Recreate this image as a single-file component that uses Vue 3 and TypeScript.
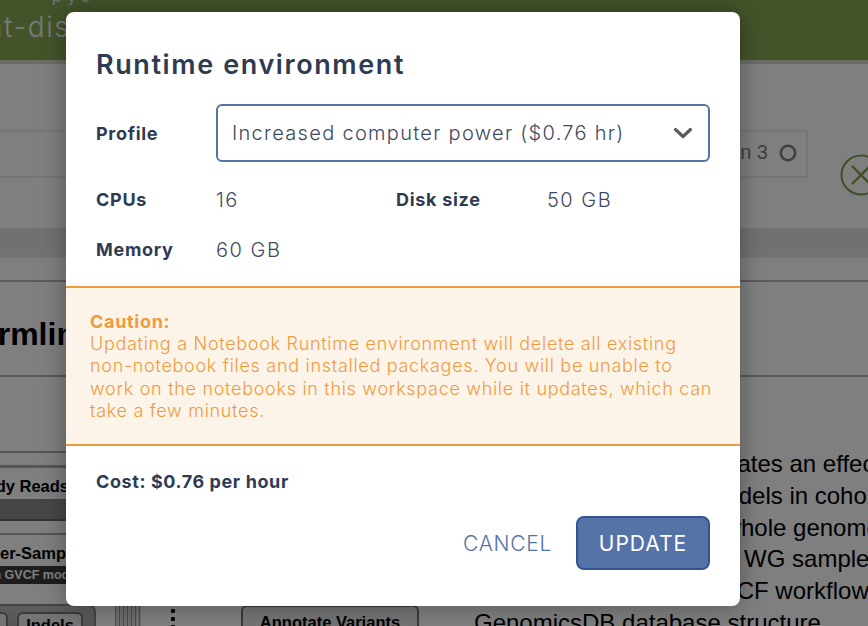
<script setup lang="ts">
interface Line { text: string; indent: number }
const lines: Line[] = [
  { text: 'This workflow generates an effective', indent: 50 },
  { text: 'of variant models in cohort', indent: 126 },
  { text: 'from whole genome', indent: 195 },
  { text: 'of 20 WG samples', indent: 210 },
  { text: 'the GVCF workflow', indent: 188 },
  { text: 'GenomicsDB database structure', indent: 0 },
]
</script>

<template>
  <div class="page">
    <header class="topbar">
      <div class="crumb">- pyJ</div>
      <div class="wsname">nt-disease</div>
    </header>
    <div class="subbar"></div>
    <div class="tabzone">
      <div class="tabstrip">
        <div class="tab">
          <span>Option 3</span>
          <svg class="ring" width="18" height="18" viewBox="0 0 18 18"><circle cx="9" cy="9" r="7.2" fill="none" stroke="#7e7e7e" stroke-width="2.6" /></svg>
        </div>
      </div>
      <svg class="closeicon" width="44" height="44" viewBox="0 0 44 44">
        <circle cx="22" cy="22" r="19.5" fill="none" stroke="#7fa04f" stroke-width="2" />
        <path d="M13 13 L31 31 M31 13 L13 31" stroke="#7fa04f" stroke-width="2.4" fill="none" />
      </svg>
    </div>
    <div class="band"></div>
    <div class="gap"></div>
    <section class="title"><h1>Germline</h1></section>
    <section class="content">
      <div class="diagram">
        <div class="rule r1"></div>
        <div class="node n1">Ready Reads</div>
        <div class="stripe"></div>
        <div class="node n2">Per-Sample</div>
        <div class="tag">in GVCF mode</div>
        <div class="group">
          <div class="chip c1"></div>
          <div class="chip c2">Indels</div>
        </div>
        <div class="bars"></div>
        <div class="dots"></div>
        <div class="chip c3">Annotate Variants</div>
      </div>
      <div class="prose">
        <div v-for="l in lines" :key="l.text" class="pline" :style="{ marginLeft: l.indent + 'px' }">{{ l.text }}</div>
      </div>
    </section>

    <div class="backdrop"></div>
    <div class="modal" role="dialog">
      <div class="mtop">
        <h2>Runtime environment</h2>
        <div class="profile">
          <label class="lab">Profile</label>
          <div class="select">
            <span>Increased computer power ($0.76 hr)</span>
            <svg width="20" height="12" viewBox="0 0 20 12"><path d="M2.5 2.5 L10 9.5 L17.5 2.5" fill="none" stroke="#5c5c5c" stroke-width="3.2" stroke-linecap="round" stroke-linejoin="round" /></svg>
          </div>
        </div>
        <div class="specs">
          <span class="lab">CPUs</span><span class="val">16</span><span class="lab">Disk size</span><span class="val">50 GB</span>
          <span class="lab">Memory</span><span class="val">60 GB</span>
        </div>
      </div>
      <div class="caution">
        <strong>Caution:</strong>
        <p>Updating a Notebook Runtime environment will delete all existing non-notebook files and installed packages. You will be unable to work on the notebooks in this workspace while it updates, which can take a few minutes.</p>
      </div>
      <div class="mbottom">
        <div class="cost">Cost: $0.76 per hour</div>
        <div class="actions">
          <button class="cancel">CANCEL</button>
          <button class="update">UPDATE</button>
        </div>
      </div>
    </div>
  </div>
</template>

<style>
html, body { margin: 0; background: #fff; overflow: hidden; }
</style>

<style scoped>
.page { position: relative; width: 868px; height: 626px; overflow: hidden; background: #fff; font-family: "Liberation Sans", Arial, sans-serif; color: #000; }
.topbar { height: 60px; background: #86a854; overflow: hidden; color: #e6e6e6; font-family: Inter, sans-serif; white-space: nowrap; }
.crumb { font-size: 16px; line-height: 16px; margin: -12px 0 0 28px; height: 16px; letter-spacing: 6px; }
.wsname { font-size: 28px; line-height: 34px; margin-top: 6px; margin-left: -14px; font-weight: 300; color: #f4f4f4; letter-spacing: 1.6px; }
.subbar { height: 4px; background: #d4dcc8; }
.tabzone { display: flex; align-items: flex-start; margin-top: 66px; height: 98px; background: #fff; }
.tabstrip { width: 808px; flex-shrink: 0; height: 48px; box-sizing: border-box; border-top: 2px solid #ededed; display: flex; justify-content: flex-end; border-bottom: 2px solid #ededed; }
.tab { display: flex; align-items: center; gap: 11px; padding: 0 9px 3px 20px; border-right: 2px solid #ededed; font-size: 20px; color: #7e7e7e; }
.ring { display: block; }
.closeicon { display: block; flex-shrink: 0; margin: 23px 0 0 31px; }
.band { height: 30px; background: linear-gradient(#e2e2e2 0 60%, #e8e8e8); }
.gap { height: 22px; }
.title { box-sizing: border-box; height: 97px; border-top: 2px solid #b4b4b4; border-bottom: 2px solid #b4b4b4; overflow: hidden; }
h1 { margin: 33px 0 0 -45px; font-size: 32px; line-height: 38px; font-weight: 700; white-space: nowrap; }
.content { display: flex; height: 247px; }
.diagram { position: relative; width: 474px; flex-shrink: 0; }
.rule { position: absolute; left: 0; width: 100%; height: 2px; background: #aaa; }
.r1 { top: 74px; }
.node { position: absolute; font-weight: 700; font-size: 16.5px; white-space: nowrap; color: #000; box-sizing: border-box; }
.n1 { left: -40px; width: 130px; padding-right: 21px; top: 88px; height: 34px; line-height: 36px; border-top: 3px solid #aaa; text-align: right; }
.stripe { position: absolute; left: 0; top: 122px; width: 100px; height: 20px; background: #8c8c8c; border-bottom: 2px solid #666; }
.n2 { left: -11px; width: 110px; top: 156px; height: 34px; line-height: 36px; border-top: 2px solid #aaa; }
.tag { position: absolute; left: -10px; top: 189px; width: 110px; height: 18px; line-height: 18px; background: #3a3a3a; color: #fff; font-size: 12.5px; font-weight: 700; white-space: nowrap; }
.group { position: absolute; left: -20px; top: 227px; width: 112px; height: 40px; border: 2px solid #888; border-radius: 8px; background: linear-gradient(#bbb, #999); }
.chip { position: absolute; background: #e8e8e8; border: 2px solid #777; border-radius: 6px; box-sizing: border-box; font-weight: 700; font-size: 16.5px; text-align: center; white-space: nowrap; }
.c1 { left: -10px; top: 6px; width: 36px; height: 50px; }
.c2 { left: 35px; top: 6px; width: 66px; height: 50px; line-height: 22px; }
.c3 { left: 241px; top: 228px; width: 178px; height: 50px; line-height: 30px; }
.bars { position: absolute; left: 115px; top: 228px; width: 26px; height: 30px; background: repeating-linear-gradient(90deg, #999 0 1px, #ddd 1px 4px); }
.dots { position: absolute; left: 171px; top: 230px; width: 4px; height: 30px; background: radial-gradient(circle, #000 2px, transparent 2.4px) 0 0 / 4px 8px repeat-y; }
.prose { padding-top: 71px; white-space: nowrap; font-size: 24px; line-height: 32px; }
.pline { height: 31.8px; }

.backdrop { position: absolute; inset: 0; background: rgba(0, 0, 0, 0.5); }
.modal { position: absolute; left: 66px; top: 12px; width: 674px; height: 594px; background: #fff; border-radius: 8px; box-shadow: 0 0 24px rgba(0, 0, 0, 0.35); display: flex; flex-direction: column; font-family: Inter, "Liberation Sans", sans-serif; color: #2f3b52; }
.mtop { height: 274px; box-sizing: border-box; padding: 37px 30px 0; }
h2 { margin: 0; font-size: 27px; line-height: 32px; font-weight: 600; letter-spacing: 1.6px; }
.profile { display: flex; align-items: center; margin-top: 23px; }
.lab { font-size: 18px; font-weight: 700; line-height: 24px; letter-spacing: 0.7px; padding-top: 2px; }
.profile .lab { width: 120px; flex-shrink: 0; }
.select { width: 494px; height: 58px; box-sizing: border-box; border: 2px solid #5673a8; border-radius: 6px; padding: 0 15px 0 14px; display: flex; align-items: center; justify-content: space-between; font-size: 20px; font-weight: 300; letter-spacing: 1.3px; color: #404a5e; }
.specs { display: grid; grid-template-columns: 120px 180px 151px auto; grid-auto-rows: 50px; align-items: center; margin-top: 12px; }
.val { font-size: 20px; font-weight: 300; letter-spacing: 1.5px; color: #404a5e; padding-top: 2px; }
.caution { height: 160px; box-sizing: border-box; border-top: 2px solid #f09a3e; border-bottom: 2px solid #f09a3e; background: #fdf4e9; padding: 23px 24px 0; color: #f09a3e; font-size: 18px; line-height: 22.2px; letter-spacing: 0.7px; }
.caution strong { display: block; font-weight: 700; }
.caution p { margin: 0; font-weight: 300; }
.mbottom { flex: 1; padding: 24px 30px 0; }
.cost { font-size: 18px; font-weight: 700; line-height: 24px; letter-spacing: 0.6px; }
.actions { display: flex; justify-content: flex-end; align-items: center; margin-top: 22px; gap: 24px; }
button { font-family: inherit; font-size: 21px; font-weight: 300; letter-spacing: 1px; cursor: pointer; }
.cancel { border: 0; background: none; color: #5673a8; padding: 0; letter-spacing: 0.7px; }
.update { width: 134px; height: 54px; box-sizing: border-box; background: #5673a8; border: 2px solid #33548f; border-radius: 8px; color: #fff; font-weight: 400; }
</style>
